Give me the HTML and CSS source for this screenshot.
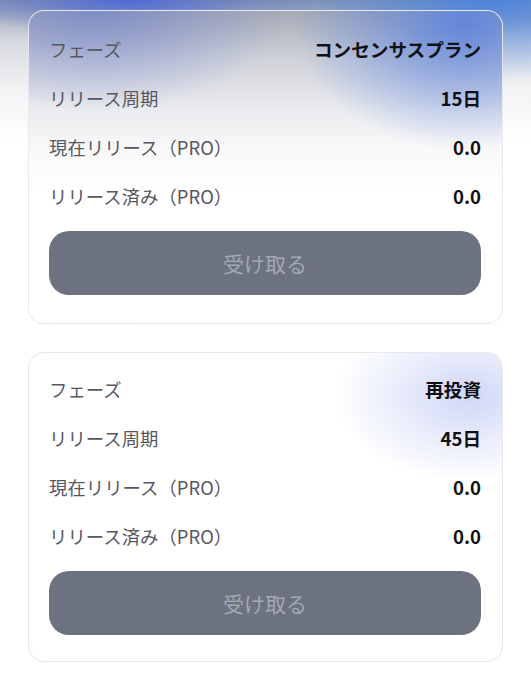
FILE: index.html
```html
<!DOCTYPE html>
<html lang="ja">
<head>
<meta charset="utf-8">
<link rel="stylesheet" href="styles.css">
</head>
<body>
<main class="list">
  <section class="card card-consensus">
    <div class="row"><span class="label">フェーズ</span><span class="value">コンセンサスプラン</span></div>
    <div class="row"><span class="label">リリース周期</span><span class="value">15日</span></div>
    <div class="row"><span class="label">現在リリース（PRO）</span><span class="value">0.0</span></div>
    <div class="row"><span class="label">リリース済み（PRO）</span><span class="value">0.0</span></div>
    <button class="claim" type="button">受け取る</button>
  </section>
  <section class="card card-reinvest">
    <div class="row"><span class="label">フェーズ</span><span class="value">再投資</span></div>
    <div class="row"><span class="label">リリース周期</span><span class="value">45日</span></div>
    <div class="row"><span class="label">現在リリース（PRO）</span><span class="value">0.0</span></div>
    <div class="row"><span class="label">リリース済み（PRO）</span><span class="value">0.0</span></div>
    <button class="claim" type="button">受け取る</button>
  </section>
</main>
</body>
</html>
```

FILE: styles.css
```css
html, body {
  margin: 0;
  padding: 0;
}
body {
  width: 531px;
  height: 680px;
  overflow: hidden;
  font-family: "Noto Sans CJK JP", "Noto Sans", "Liberation Sans", sans-serif;
  background:
    radial-gradient(ellipse 190px 34px at 24% 0, rgba(75, 105, 215, 0.95), rgba(75, 105, 215, 0) 100%),
    radial-gradient(ellipse 240px 80px at 92% 0, rgba(70, 130, 225, 0.9), rgba(70, 130, 225, 0) 100%),
    linear-gradient(to bottom, #8f97a8 0, #d5d8df 40px, #f3f3f5 90px, #ffffff 140px);
}
.list {
  display: flex;
  flex-direction: column;
  gap: 28px;
  padding: 10px 28px 0 28px;
}
.card {
  border-radius: 16px;
  border: 1px solid #e8e8ec;
  padding: 13px 21px 28px 20px;
  display: flex;
  flex-direction: column;
}
.card-consensus {
  border-color: rgba(232, 234, 240, 0.95);
  background:
    radial-gradient(ellipse 170px 125px at 92% 4%, rgba(88, 128, 222, 0.88), rgba(88, 128, 222, 0) 100%),
    radial-gradient(ellipse 190px 100px at 14% 0, rgba(105, 125, 205, 0.65), rgba(105, 125, 205, 0) 100%),
    linear-gradient(to bottom, #a6aab5 0, #cdd0d7 45px, #ebecef 100px, #f9f9fa 140px, #ffffff 180px);
}
.card-reinvest {
  padding-top: 11px;
  padding-bottom: 26px;
  background:
    radial-gradient(ellipse 135px 85px at 93% 14%, rgba(206, 213, 246, 0.95), rgba(225, 230, 250, 0) 100%),
    #ffffff;
}
.row {
  height: 49px;
  display: flex;
  align-items: center;
  justify-content: space-between;
}
.label {
  color: #57585f;
  font-size: 18.4px;
}
.value {
  color: #111114;
  font-weight: 700;
  font-size: 18.6px;
}
.claim {
  margin-top: 11px;
  height: 64px;
  border: none;
  border-radius: 20px;
  background: #6c7280;
  color: #a3a8b2;
  font-family: inherit;
  font-size: 21px;
  padding: 0;
}
```
